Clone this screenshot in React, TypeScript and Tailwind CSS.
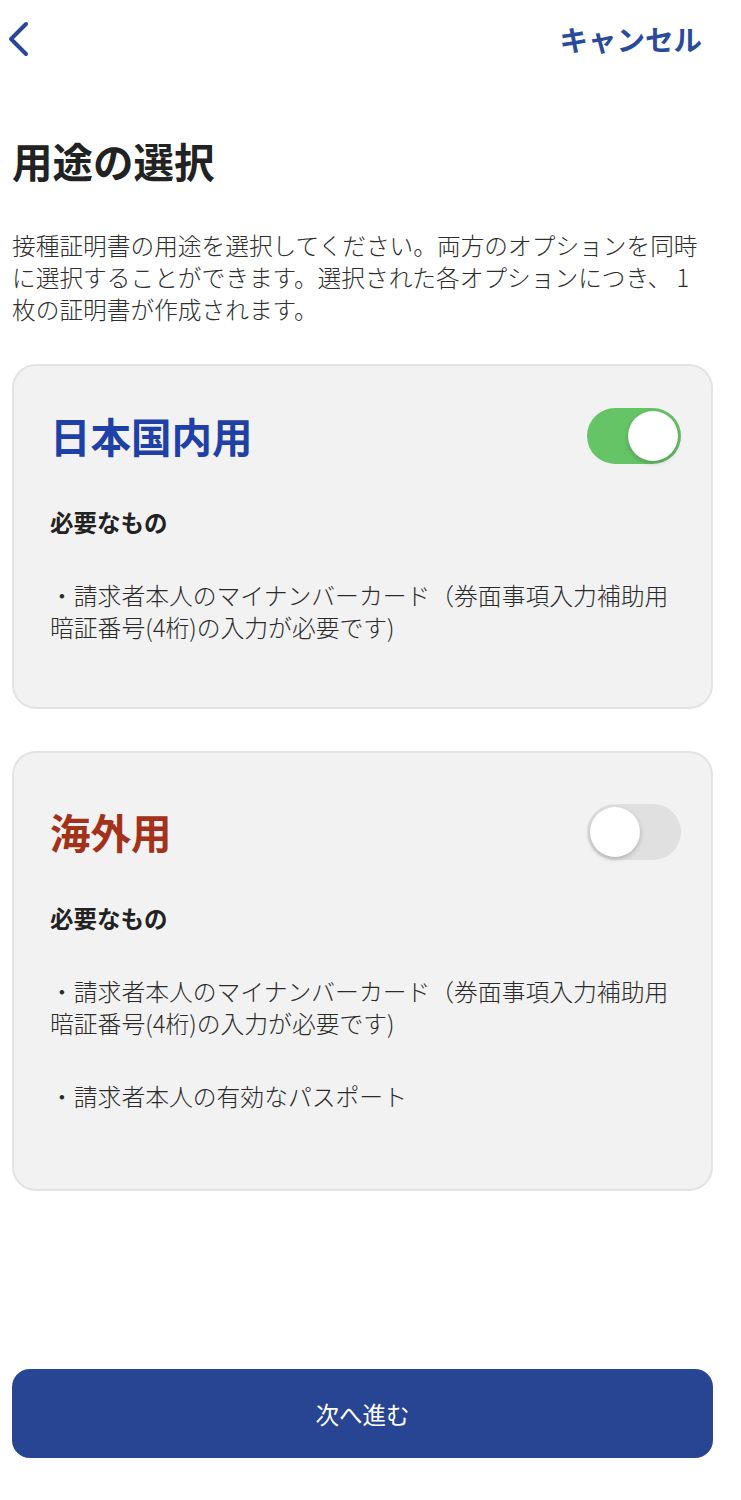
import { useState } from "react";

type ToggleProps = {
	on: boolean;
	onChange: () => void;
};

function Toggle({ on, onChange }: ToggleProps) {
	return (
		<button
			type="button"
			onClick={onChange}
			className={`flex h-[56px] w-[94px] shrink-0 items-center rounded-full p-[3px] ${
				on ? "justify-end bg-[#65c466]" : "justify-start bg-[#e0e0e0]"
			}`}
		>
			<span className="block h-[50px] w-[50px] rounded-full bg-white shadow-[0_2px_5px_rgba(0,0,0,0.22)]" />
		</button>
	);
}

type CardProps = {
	title: string;
	titleColor: string;
	on: boolean;
	onToggle: () => void;
	items: React.ReactNode[];
	className: string;
};

function PurposeCard({ title, titleColor, on, onToggle, items, className }: CardProps) {
	return (
		<div className={`rounded-[24px] border-2 border-[#e3e3e3] bg-[#f2f2f2] pl-[36px] pr-[30px] ${className}`}>
			<div className="flex h-[56px] items-center justify-between">
				<h2 className={`text-[40.5px] font-bold leading-[56px] ${titleColor}`}>{title}</h2>
				<Toggle on={on} onChange={onToggle} />
			</div>
			<p className="mt-[42px] text-[23.5px] font-bold leading-[32px] text-[#222]">必要なもの</p>
			{items.map((item, i) => (
				<p key={i} className="mt-[41px] text-[23.8px] font-light leading-[32px] text-[#2a2a2a]">
					{item}
				</p>
			))}
		</div>
	);
}

export default function App() {
	const [domestic, setDomestic] = useState(true);
	const [overseas, setOverseas] = useState(false);

	const myNumber = (
		<>
			・請求者本人のマイナンバーカード（券面事項入力補助用
			<br />
			暗証番号(4桁)の入力が必要です)
		</>
	);

	return (
		<div className="min-h-[1500px] bg-white font-['Noto_Sans_CJK_JP','Noto_Sans',sans-serif]">
			{/* Top bar */}
			<div className="flex h-[78px] items-center justify-between pl-[6px] pr-[39px]">
				<svg width="24" height="40" viewBox="0 0 24 40" fill="none">
					<polyline
						points="20,5 5,20 20,35"
						stroke="#27479a"
						strokeWidth="4"
						strokeLinecap="round"
						strokeLinejoin="round"
					/>
				</svg>
				<span className="text-[28.5px] font-bold leading-[36px] text-[#2a4a9a]">キャンセル</span>
			</div>

			<div className="pl-3 pr-[28px]">
				<h1 className="mt-[59px] text-[40.5px] font-bold leading-[48px] text-[#222]">用途の選択</h1>

				<p className="mt-[44px] text-[23.7px] font-light leading-[32px] text-[#2e2e2e]">
					接種証明書の用途を選択してください。両方のオプションを同時
					<br />
					に選択することができます。選択された各オプションにつき、 1
					<br />
					枚の証明書が作成されます。
				</p>

				<PurposeCard
					className="mt-[39px] pt-[42px] pb-[64px]"
					title="日本国内用"
					titleColor="text-[#1f40a6]"
					on={domestic}
					onToggle={() => setDomestic(!domestic)}
					items={[myNumber]}
				/>

				<PurposeCard
					className="mt-[42px] pt-[51px] pb-[77px]"
					title="海外用"
					titleColor="text-[#a3321b]"
					on={overseas}
					onToggle={() => setOverseas(!overseas)}
					items={[myNumber, "・請求者本人の有効なパスポート"]}
				/>

				<button
					type="button"
					className="mt-[178px] flex h-[89px] w-full items-center justify-center rounded-[18px] bg-[#274593] text-[23.5px] font-normal leading-[32px] text-white"
				>
					次へ進む
				</button>
			</div>
		</div>
	);
}
